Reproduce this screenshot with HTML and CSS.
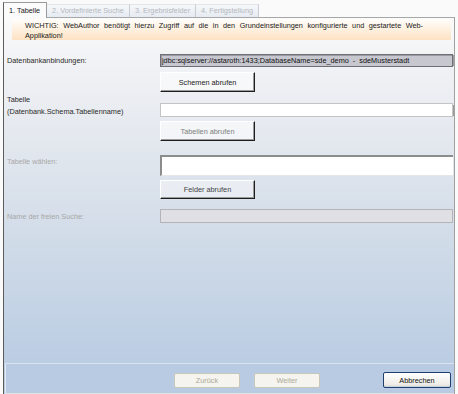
FILE: index.html
```html
<!doctype html>
<html lang="de">
  <head>
    <meta charset="UTF-8" />
    <title>Assistent</title>
    <link rel="stylesheet" href="styles.css">
  </head>
  <body>
    <div class="wizard">
      <div class="tabs">
        <div class="tab active">1. Tabelle</div>
        <div class="tab">2. Vordefinierte Suche</div>
        <div class="tab">3. Ergebnisfelder</div>
        <div class="tab">4. Fertigstellung</div>
      </div>
      <div class="panel">
        <div class="content">
          <div class="warning">
            <p>WICHTIG: WebAuthor benötigt hierzu Zugriff auf die in den Grundeinstellungen konfigurierte und gestartete Web-<br>Applikation!</p>
          </div>
          <div class="form">
            <div class="row row-db">
              <label class="label">Datenbankanbindungen:</label>
              <div class="field field-db">
                <span class="value">jdbc:sqlserver://astaroth:1433;DatabaseName=sde_demo&nbsp; - &nbsp;sdeMusterstadt</span>
                <span class="nub"></span>
              </div>
            </div>
            <div class="row row-btn1">
              <span class="label"></span>
              <button class="btn">Schemen abrufen</button>
            </div>
            <div class="row row-table">
              <label class="label label-two">Tabelle<br>(Datenbank.Schema.Tabellenname)</label>
              <div class="field field-table">
                <span class="nub"></span>
              </div>
            </div>
            <div class="row row-btn2">
              <span class="label"></span>
              <button class="btn btn-muted">Tabellen abrufen</button>
            </div>
            <div class="row row-choose">
              <label class="label label-off label-top">Tabelle wählen:</label>
              <div class="field field-choose"></div>
            </div>
            <div class="row row-btn3">
              <span class="label"></span>
              <button class="btn btn-dim">Felder abrufen</button>
            </div>
            <div class="row row-name">
              <label class="label label-off">Name der freien Suche:</label>
              <div class="field field-name"></div>
            </div>
          </div>
        </div>
        <div class="footer">
          <button class="nav-btn" disabled>Zurück</button>
          <button class="nav-btn" disabled>Weiter</button>
          <span class="spacer"></span>
          <button class="nav-btn primary">Abbrechen</button>
        </div>
      </div>
    </div>
  </body>
</html>
```

FILE: styles.css
```css
html,
body {
  margin: 0;
  height: 100%;
  background: #fafafa;
}
body {
  font-family: "Liberation Sans", Tahoma, Arial, sans-serif;
  font-size: 7.3px;
  color: #2a2a2a;
  overflow: hidden;
}
.wizard {
  display: flex;
  flex-direction: column;
  height: 394px;
  padding: 2px 3px 0 3px;
  box-sizing: border-box;
}

/* tabs */
.tabs {
  display: flex;
  align-items: flex-end;
  height: 15px;
  position: relative;
  z-index: 1;
}
.tab {
  height: 12px;
  line-height: 12px;
  padding: 0 5px;
  color: #b4b8c0;
  background: linear-gradient(#f6f7f9, #e6ebf2);
  border-right: 1px solid #c9ccd2;
  border-top: 1px solid #e2e4e8;
}
.tab.active {
  height: 15px;
  line-height: 15px;
  color: #1a1a1a;
  background: #fbfbfb;
  border: 1px solid #9a9a9a;
  border-left-color: #606060;
  border-bottom: none;
  margin-bottom: -1px;
  padding: 0 6px 0 5px;
}

/* panel */
.panel {
  flex: 1;
  display: flex;
  flex-direction: column;
  border-top: 1px solid #a8a8a8;
  border-left: 1px solid #5c5c5c;
  border-right: 1px solid #a0a0a0;
  background: linear-gradient(#fafafa 0%, #f1f2f5 12%, #e2e7ee 35%, #d0dbe8 60%, #bfd0e4 85%, #b7cae2 100%);
  overflow: hidden;
}
.content {
  flex: 1;
}
.warning {
  margin: 1px 3px 0 8px;
  height: 21px;
  box-sizing: border-box;
  padding: 2px 28px 0 13px;
  background: linear-gradient(#fffefc, #fde2c2);
  color: #1a1a1a;
}
.warning p {
  margin: 0;
  line-height: 9.5px;
  text-align: justify;
  text-align-last: justify;
}

/* form */
.form {
  display: flex;
  flex-direction: column;
  padding: 0 2px 0 3px;
}
.row {
  display: flex;
  align-items: center;
}
.label {
  width: 153px;
  flex-shrink: 0;
}
.label-two {
  align-self: flex-end;
  line-height: 12px;
  margin-top: -10px;
  margin-bottom: -1px;
}
.label-off {
  color: #a8a8a8;
}
.label-top {
  align-self: flex-start;
  padding-top: 2px;
}
.row-db {
  margin-top: 14px;
}
.row-btn1 {
  margin-top: 5px;
}
.row-table {
  margin-top: 11px;
}
.row-btn2 {
  margin-top: 4px;
}
.row-choose {
  margin-top: 14px;
  margin-right: -1px;
}
.row-btn3 {
  margin-top: 4px;
}
.row-name {
  margin-top: 10px;
}

.field {
  flex: 1;
  display: flex;
  align-items: center;
  box-sizing: border-box;
}
.field-db {
  height: 13px;
  background: #c7c7cf;
  border: 1px solid #6e6e74;
  box-shadow: inset 1px 1px #9a9aa2;
  padding-left: 1px;
  color: #111;
  margin-right: -1px;
}
.field-db .value {
  flex: 1;
  white-space: nowrap;
  overflow: hidden;
}
.nub {
  width: 2px;
  height: 9px;
  border: 1px solid #9c9c9c;
  border-right: none;
  background: #fff;
  margin-right: -4px;
}
.field-table {
  height: 14px;
  background: #fff;
  border: 1px solid #c4c4c4;
  justify-content: flex-end;
  margin-right: -1px;
}
.field-choose {
  height: 21px;
  background: #fff;
  border: 1px solid #e6e6e6;
  border-right: none;
  border-top: 2px solid #8c8c8c;
  border-left: 2px solid #8c8c8c;
}
.field-name {
  height: 14px;
  background: #e0dfe4;
  border: 1px solid #b4b4b8;
  margin-right: -1px;
}

.btn {
  width: 95px;
  height: 20px;
  padding: 0;
  font: inherit;
  color: #222;
  background: rgba(255, 255, 255, 0.55);
  border: 1px solid;
  border-color: #fff #1e1e1e #1e1e1e #fff;
  box-shadow: inset -1px -1px #9a9a9a;
}
.btn-muted {
  color: #808080;
}
.btn-dim {
  color: #444;
  height: 19px;
  background: rgba(255, 255, 255, 0.4);
}

/* footer */
.footer {
  display: flex;
  align-items: flex-start;
  gap: 14px;
  height: 31px;
  box-sizing: border-box;
  margin-left: 1px;
  padding: 9px 3px 0 168px;
  background: #b8cbe3;
  border-top: 1px solid #dbe3ee;
  border-left: 1px solid #e4eaf2;
  border-bottom: 1px solid #e2e2e2;
}
.spacer {
  flex: 1;
}
.nav-btn {
  width: 66px;
  height: 15px;
  padding: 0;
  font: inherit;
  border-radius: 2px;
  border: 1px solid #c9c7ba;
  background: #f5f4ee;
  color: #aca899;
}
.nav-btn.primary {
  width: 68px;
  height: 16px;
  margin-top: -1px;
  color: #111;
  border-color: #1f3f6e;
  background: linear-gradient(#ffffff, #eeede8 80%, #d8d6cc);
  box-shadow: inset 0 -1px #c8d4e6;
}
```
